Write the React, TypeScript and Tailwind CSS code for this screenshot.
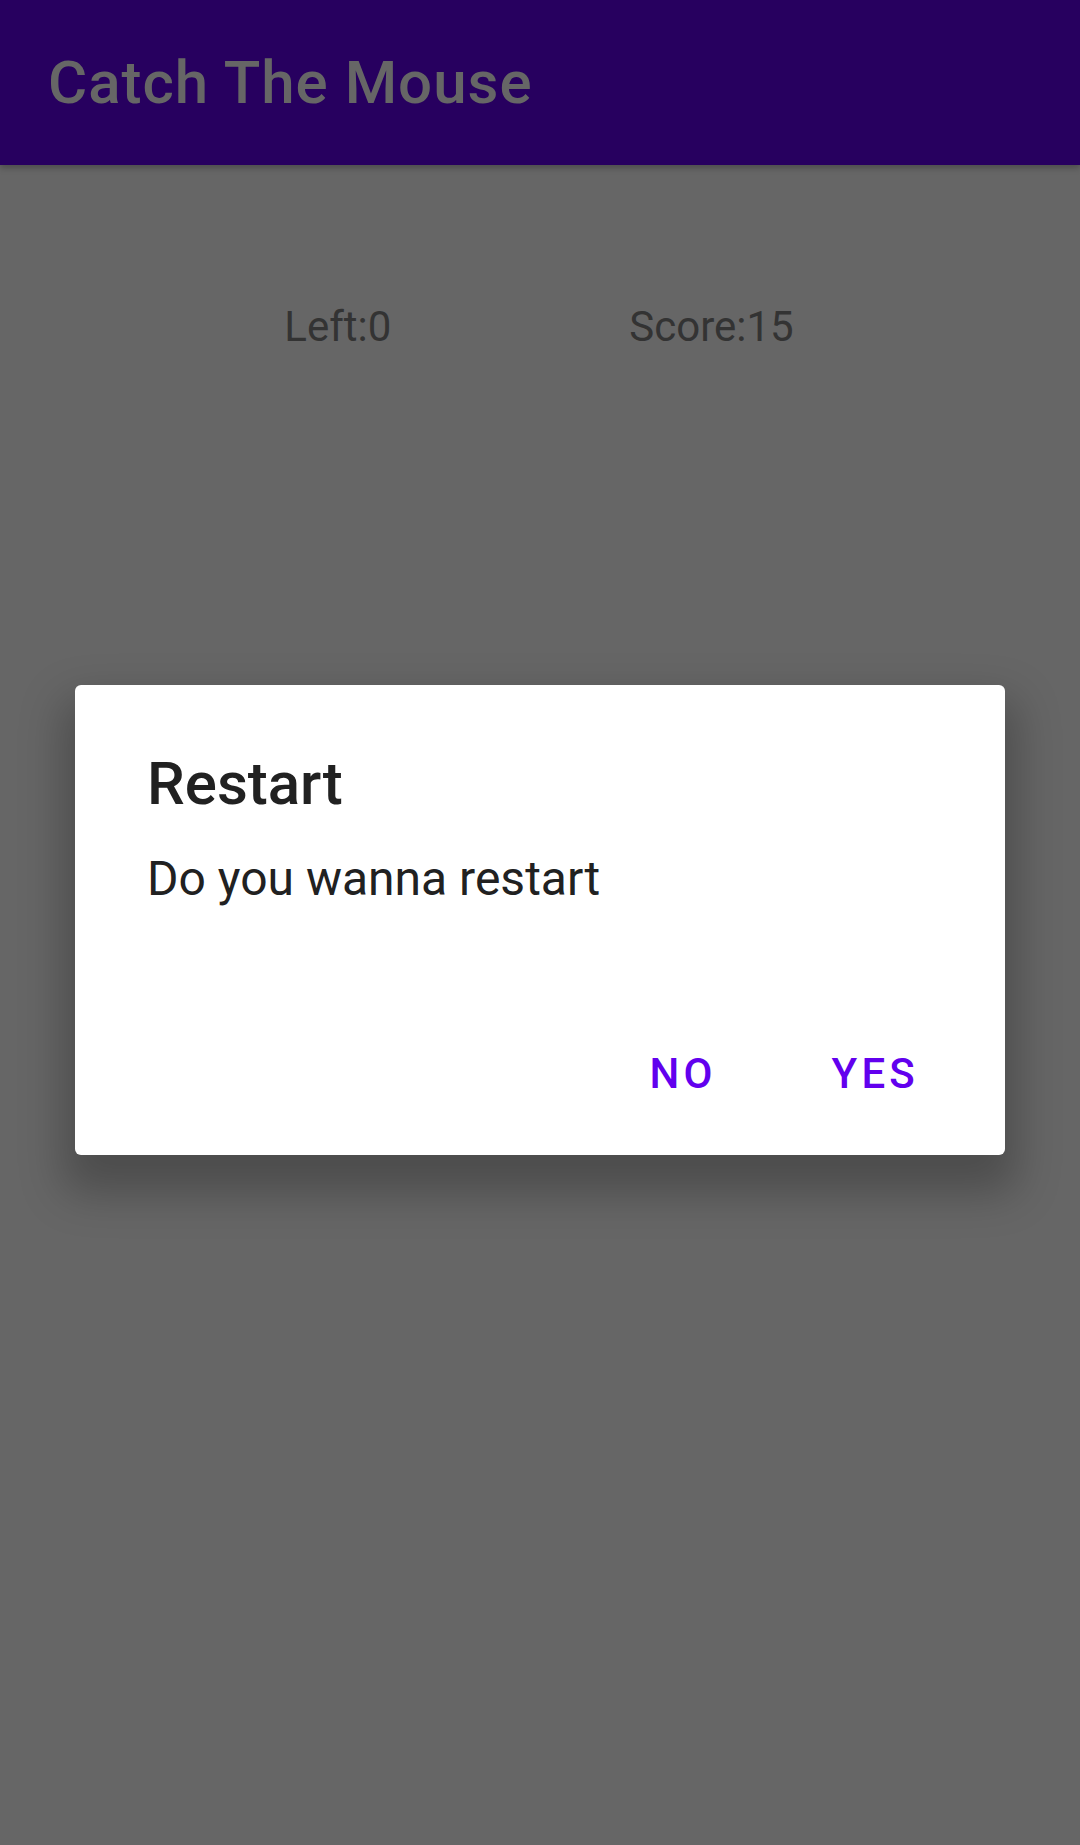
export default function App() {
  return (
    <div
      className="relative w-[1080px] h-[1845px] bg-[#666666] overflow-hidden"
      style={{ fontFamily: 'Roboto, "Noto Sans", sans-serif' }}
    >
      <header className="h-[165px] bg-[#27005f] flex items-center pl-[48px] shadow-[0_3px_6px_rgba(0,0,0,0.25)] relative z-10">
        <h1 className="text-[60px] leading-none font-medium tracking-[1px] text-[#666666]">Catch The Mouse</h1>
      </header>

      <div className="flex justify-center gap-[238px] pt-[141px] pr-[2px] text-[42px] leading-none text-[#333333]">
        <span>Left:0</span>
        <span>Score:15</span>
      </div>

      {/* dialog */}
      <div className="absolute left-[75px] top-[685px] w-[930px] h-[470px] bg-white rounded-[6px] shadow-[0_26px_44px_12px_rgba(0,0,0,0.25)] flex flex-col">
        <div className="pt-[69px] pl-[72px] pr-[72px]">
          <div className="text-[60px] leading-none font-medium text-[#212121]">Restart</div>
          <div className="mt-[41px] text-[48px] leading-none text-[#212121]">Do you wanna restart</div>
        </div>
        <div className="mt-auto mb-[60px] flex justify-end gap-[115px] pr-[86px] text-[42px] leading-none font-medium tracking-[0.1em] text-[#6200ee]">
          <span>NO</span>
          <span>YES</span>
        </div>
      </div>
    </div>
  );
}
